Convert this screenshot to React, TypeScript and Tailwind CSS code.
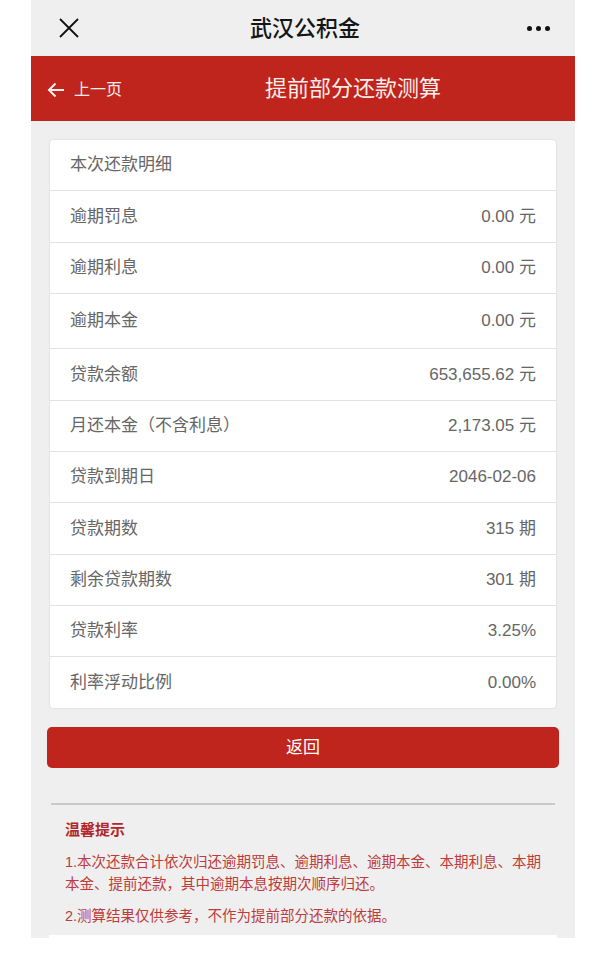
const rows: { label: string; value: string; h: string }[] = [
  { label: '逾期罚息', value: '0.00 元', h: 'h-[52px]' },
  { label: '逾期利息', value: '0.00 元', h: 'h-[51px]' },
  { label: '逾期本金', value: '0.00 元', h: 'h-[55px]' },
  { label: '贷款余额', value: '653,655.62 元', h: 'h-[52px]' },
  { label: '月还本金（不含利息）', value: '2,173.05 元', h: 'h-[51px]' },
  { label: '贷款到期日', value: '2046-02-06', h: 'h-[51px]' },
  { label: '贷款期数', value: '315 期', h: 'h-[52px]' },
  { label: '剩余贷款期数', value: '301 期', h: 'h-[51px]' },
  { label: '贷款利率', value: '3.25%', h: 'h-[51px]' },
  { label: '利率浮动比例', value: '0.00%', h: 'h-[51px]' },
];

export default function App() {
  return (
    <div
      className="min-h-[967px] bg-white"
      style={{ fontFamily: '"Liberation Sans", "Noto Sans CJK SC", sans-serif' }}
    >
      <div className="ml-[31px] w-[544px] h-[938px] bg-[#efefef] flex flex-col">
        {/* wechat top bar */}
        <div className="h-[56px] flex items-center justify-between pl-[28px] pr-[25px]">
          <svg width="20" height="20" viewBox="0 0 20 20" className="text-[#111]">
            <path d="M1 1 L19 19 M19 1 L1 19" stroke="currentColor" strokeWidth="1.8" fill="none" />
          </svg>
          <div className="text-[22px] font-medium text-[#151515] ml-[4px]">武汉公积金</div>
          <div className="flex gap-[4px]">
            <span className="w-[5px] h-[5px] rounded-full bg-[#111]" />
            <span className="w-[5px] h-[5px] rounded-full bg-[#111]" />
            <span className="w-[5px] h-[5px] rounded-full bg-[#111]" />
          </div>
        </div>

        {/* red nav bar */}
        <div className="h-[65px] bg-[#bf251d] flex items-center pl-[16px] text-[#fdeeea]">
          <div className="flex items-center gap-[9px] mt-[2px]">
            <svg width="18" height="16" viewBox="0 0 18 16">
              <path d="M17 8 H2 M8.5 1.5 L2 8 L8.5 14.5" stroke="currentColor" strokeWidth="2" fill="none" />
            </svg>
            <span className="text-[16px]">上一页</span>
          </div>
          <div className="ml-[143px] text-[22px]">提前部分还款测算</div>
        </div>

        <div className="px-[18px] pt-[18px]">
          <div className="bg-white rounded-[4px] border border-[#e4e4e4] text-[#666] text-[17px]">
            <div className="h-[51px] flex items-center px-[20px] border-b border-[#e2e2e2]">本次还款明细</div>
            {rows.map((r, i) => (
              <div
                key={r.label}
                className={`${r.h} flex items-center justify-between px-[20px] ${
                  i < rows.length - 1 ? 'border-b border-[#e2e2e2]' : ''
                }`}
              >
                <span>{r.label}</span>
                <span>{r.value}</span>
              </div>
            ))}
          </div>
        </div>

        <div className="px-[16px] mt-[18px]">
          <button className="w-full h-[41px] rounded-[5px] bg-[#bf251d] text-white text-[17px]">返回</button>
        </div>

        <div className="mx-[20px] mt-[35px] h-[2px] bg-[#c9c9c9]" />

        <div className="pl-[34px] pr-[21px] pt-[14px] text-[#bd3b3b]">
          <div className="text-[15px] font-bold text-[#b1272b] leading-[22px]">温馨提示</div>
          <p className="mt-[10px] text-[14.5px] leading-[22px]">
            1.本次还款合计依次归还逾期罚息、逾期利息、逾期本金、本期利息、本期本金、提前还款，其中逾期本息按期次顺序归还。
          </p>
          <p className="mt-[10px] text-[14.5px] leading-[22px]">2.测算结果仅供参考，不作为提前部分还款的依据。</p>
        </div>

        <div className="mt-auto mx-[18px] h-[3px] bg-white" />
      </div>
    </div>
  );
}
